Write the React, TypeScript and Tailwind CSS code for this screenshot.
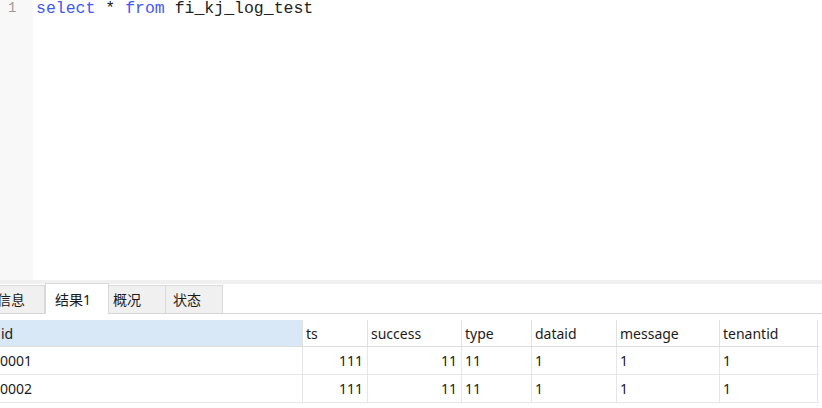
import React from "react";

type Row = {
  id: string;
  ts: string;
  success: string;
  type: string;
  dataid: string;
  message: string;
  tenantid: string;
};

const columns: { key: keyof Row; label: string; width: string; right?: boolean }[] = [
  { key: "id", label: "id", width: "w-[303px]" },
  { key: "ts", label: "ts", width: "w-[65px]", right: true },
  { key: "success", label: "success", width: "w-[94px]", right: true },
  { key: "type", label: "type", width: "w-[70px]" },
  { key: "dataid", label: "dataid", width: "w-[85px]" },
  { key: "message", label: "message", width: "w-[103px]" },
  { key: "tenantid", label: "tenantid", width: "w-[98px]" },
];

const rows: Row[] = [
  { id: "0001", ts: "111", success: "11", type: "11", dataid: "1", message: "1", tenantid: "1" },
  { id: "0002", ts: "111", success: "11", type: "11", dataid: "1", message: "1", tenantid: "1" },
];

const uiFont = "font-['Noto_Sans','Noto_Sans_CJK_SC',sans-serif]";

const App: React.FC = () => {
  return (
    <div className={`w-[822px] h-[408px] overflow-hidden bg-white text-[#1b1b1b] ${uiFont}`}>
      {/* editor */}
      <div className="flex h-[280px]">
        <div className="w-[33px] shrink-0 bg-[#f8f8f8] pl-[8px] font-['Liberation_Mono',monospace] text-[14px] leading-[16px] text-[#9a9a9a]">
          1
        </div>
        <div className="flex-1 pl-[3px] font-['Liberation_Mono',monospace] text-[16.5px] leading-[18px] whitespace-pre">
          <span className="text-[#4257f2]">select</span>
          <span className="text-[#222]"> * </span>
          <span className="text-[#4257f2]">from</span>
          <span className="text-[#222]"> fi_kj_log_test</span>
        </div>
      </div>

      <div className="h-[4px] bg-[#f0f0f0]" />

      {/* tabs */}
      <div className="flex h-[30px] items-end border-b border-[#d6d6d6] text-[14px]">
        <div className="ml-[-9px] flex h-[28px] w-[54px] shrink-0 items-center border border-b-0 border-[#d9d9d9] bg-[#f0f0f0] pl-[5px]">
          信息
        </div>
        <div className="mb-[-1px] flex h-[31px] w-[64px] shrink-0 items-center border border-b-0 border-[#d9d9d9] bg-white pl-[9px]">
          结果1
        </div>
        <div className="flex h-[28px] w-[57px] shrink-0 items-center border border-b-0 border-l-0 border-[#d9d9d9] bg-[#f0f0f0] pl-[4px]">
          概况
        </div>
        <div className="flex h-[28px] w-[57px] shrink-0 items-center border border-b-0 border-l-0 border-[#d9d9d9] bg-[#f0f0f0] pl-[7px]">
          状态
        </div>
      </div>

      {/* grid */}
      <div className="mt-[6px] w-[819px] text-[14px]">
        <div className="flex h-[27px] border-b border-[#dcdcdc]">
          {columns.map((c, i) => (
            <div
              key={c.key}
              className={`${c.width} flex shrink-0 items-center border-r border-[#e2e2e2] ${
                i === 0 ? "bg-[#d9e8f7] pl-[1px]" : "pl-[3px]"
              }`}
            >
              {c.label}
            </div>
          ))}
        </div>
        {rows.map((r) => (
          <div key={r.id} className="flex h-[28px] border-b border-[#e6e6e6]">
            {columns.map((c, i) => (
              <div
                key={c.key}
                className={`${c.width} flex shrink-0 items-center border-r border-[#e6e6e6] ${
                  c.right ? "justify-end pr-[4px]" : i === 0 ? "pl-[0px]" : "pl-[3px]"
                }`}
              >
                {r[c.key]}
              </div>
            ))}
          </div>
        ))}
      </div>
    </div>
  );
};

export default App;
